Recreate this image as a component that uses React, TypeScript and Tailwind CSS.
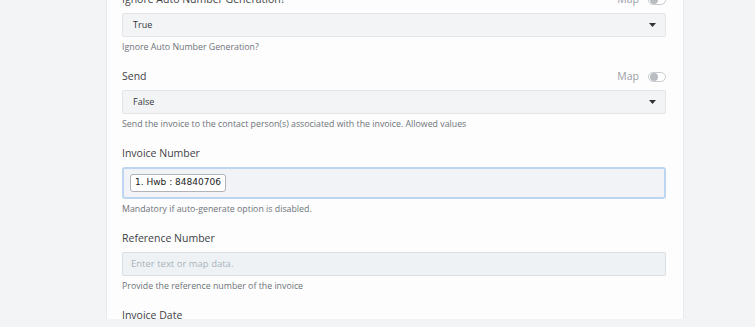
import React from 'react';

interface Field {
  label: string;
  kind: 'select' | 'pill' | 'text';
  value?: string;
  helper?: string;
  map?: boolean;
}

const FIELDS: Field[] = [
  { label: 'Ignore Auto Number Generation?', kind: 'select', value: 'True', helper: 'Ignore Auto Number Generation?', map: true },
  { label: 'Send', kind: 'select', value: 'False', helper: 'Send the invoice to the contact person(s) associated with the invoice. Allowed values', map: true },
  { label: 'Invoice Number', kind: 'pill', value: '1. Hwb : 84840706', helper: 'Mandatory if auto-generate option is disabled.' },
  { label: 'Reference Number', kind: 'text', helper: 'Provide the reference number of the invoice' },
  { label: 'Invoice Date', kind: 'text' },
];

const MapToggle: React.FC = () => (
  <div className="flex items-center gap-[9px]">
    <span className="text-[10.5px] text-[#9aa0a6]">Map</span>
    <div className="w-[18px] h-[10px] rounded-full border border-[#c9ccd0] bg-white flex items-center px-[1px]">
      <div className="w-[8px] h-[8px] rounded-full bg-[#b9bcc0]" />
    </div>
  </div>
);

const FieldRow: React.FC<{ f: Field }> = ({ f }) => (
  <div className="flex flex-col">
    <div className="h-[16px] flex items-center justify-between">
      <span className="text-[10.5px] text-[#3f4245]">{f.label}</span>
      {f.map && <MapToggle />}
    </div>
    <div className="mt-[5px]">
      {f.kind === 'select' && (
        <div className="h-[24px] rounded-[2px] border border-[#e3e5e8] bg-[#f3f4f6] flex items-center justify-between pl-[10px] pr-[9px]">
          <span className="text-[9px] text-[#33363a]">{f.value}</span>
          <svg width="7" height="4" viewBox="0 0 7 4"><path d="M0 0h7L3.5 4z" fill="#333" /></svg>
        </div>
      )}
      {f.kind === 'pill' && (
        <div className="h-[32px] rounded-[3px] border-2 border-[#bcd6f2] bg-[#f2f3f6] flex items-center pl-[6px]">
          <span className="h-[18px] px-[4px] flex items-center rounded-[3px] border border-[#b0b3b8] bg-white text-[9px] text-[#222] [font-family:'DejaVu_Sans',sans-serif]">{f.value}</span>
        </div>
      )}
      {f.kind === 'text' && f.helper && (
        <div className="h-[24px] rounded-[2px] border border-[#d6dfe6] bg-[#eef2f5] flex items-center pl-[8px]">
          <span className="text-[9.5px] text-[#aab2ba]">Enter text or map data.</span>
        </div>
      )}
    </div>
    {f.helper && <div className="mt-[4px] h-[12px] leading-[12px] text-[8.8px] text-[#6e7378]">{f.helper}</div>}
  </div>
);

export default function App() {
  return (
    <div className="h-[327px] w-full overflow-hidden bg-[#f2f4f6] [font-family:'Open_Sans',sans-serif]">
      <div className="ml-[106px] w-[578px] h-full bg-[#fdfdfe] border-x border-[#e8ebee] pl-[15px] pr-[17px]">
        <div className="-mt-[8px] flex flex-col gap-[16px]">
          {FIELDS.map((f) => <FieldRow key={f.label} f={f} />)}
        </div>
      </div>
    </div>
  );
}
